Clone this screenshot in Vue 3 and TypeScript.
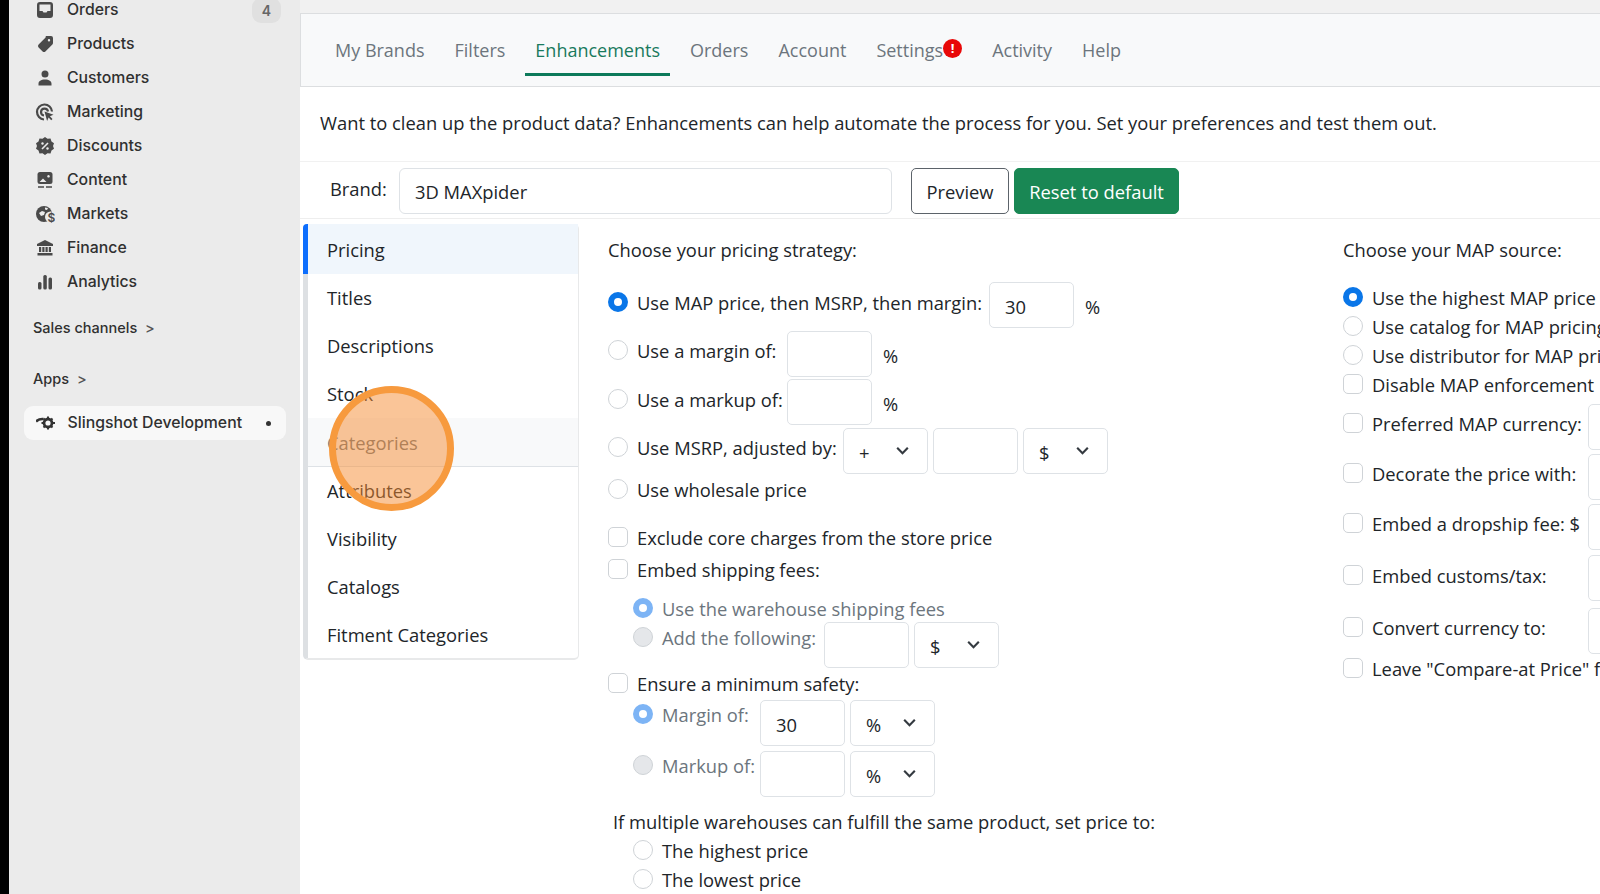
<script setup lang="ts">
const navItems = ['Products', 'Customers', 'Marketing', 'Discounts', 'Content', 'Markets', 'Finance', 'Analytics']
const tabs = ['Pricing', 'Titles', 'Descriptions', 'Stock', 'Categories', 'Attributes', 'Visibility', 'Catalogs', 'Fitment Categories']
</script>

<template>
  <div class="root">
    <aside class="side">
      <div class="nav">
        <div class="item">
          <svg class="ico" viewBox="0 0 20 20"><path d="M5 2h10a3 3 0 0 1 3 3v10a3 3 0 0 1-3 3H5a3 3 0 0 1-3-3V5a3 3 0 0 1 3-3zM4.500 4.500v6.500h3l1 1.500h3l1-1.500h3V4.500z" fill="#4a4a4a" fill-rule="evenodd"/></svg>
          <span>Orders</span><b class="count">4</b>
        </div>
        <div v-for="n in navItems" :key="n" class="item">
          <svg class="ico" viewBox="0 0 20 20">
            <path v-if="n === 'Products'" d="M11 2h5a2 2 0 0 1 2 2v5a2 2 0 0 1-.6 1.400l-7 7a2 2 0 0 1-2.800 0l-4-4a2 2 0 0 1 0-2.800l7-7A2 2 0 0 1 11 2zm3 3a1.200 1.200 0 1 0 0 2.400A1.200 1.200 0 0 0 14 5z" fill="#4a4a4a" fill-rule="evenodd"/>
            <path v-else-if="n === 'Customers'" d="M10 2.500a3.500 3.500 0 1 1 0 7 3.500 3.500 0 0 1 0-7zM3.500 17.500v-1.700c0-2.600 2.400-4.300 6.500-4.300s6.500 1.700 6.500 4.300v1.700z" fill="#4a4a4a"/>
            <g v-else-if="n === 'Marketing'"><path d="M9 17.500a7.500 7.500 0 1 1 8-8M9 13.500a3.500 3.500 0 1 1 4-4" fill="none" stroke="#4a4a4a" stroke-width="2.200"/><path d="M9.500 9.500l9 3.200-3.600 1.600 2.600 2.700-1.300 1.300-2.600-2.700-1.500 3.400z" fill="#4a4a4a"/></g>
            <g v-else-if="n === 'Discounts'"><path d="M10 1l2.500 1.800 3-.3 1 2.900 2.500 1.800-1 2.800 1 2.800-2.500 1.800-1 2.900-3-.3L10 19l-2.500-1.800-3 .3-1-2.900L1 12.800 2 10 1 7.200l2.500-1.800 1-2.900 3 .3z" fill="#4a4a4a"/><path d="M7 13l6-6" stroke="#ebebeb" stroke-width="1.600"/><circle cx="7.500" cy="7.500" r="1.200" fill="#ebebeb"/><circle cx="12.500" cy="12.500" r="1.200" fill="#ebebeb"/></g>
            <g v-else-if="n === 'Content'"><rect x="2.500" y="2" width="15" height="12" rx="2.500" fill="#4a4a4a"/><path d="M4.500 12l3.500-3.500 3.500 3.500zM13.500 5a1.300 1.300 0 1 0 .01 0z" fill="#ebebeb"/><path d="M3 17h6M11 17h6" stroke="#4a4a4a" stroke-width="1.500"/></g>
            <g v-else-if="n === 'Markets'"><circle cx="9" cy="10" r="8" fill="#4a4a4a"/><path d="M4 9l3-2 3 1-1 3-3 1zM10 3.500l3 .5-1 2-2-.5z" fill="#ebebeb"/><circle cx="15.500" cy="13" r="5.500" fill="#ebebeb"/><text x="12.500" y="18" font-size="12" font-family="Inter, sans-serif" font-weight="600" fill="#4a4a4a">$</text></g>
            <path v-else-if="n === 'Finance'" d="M10 2l8 4v2H2V6zM4 9h2.200v5H4zM7.300 9h2.200v5H7.300zM10.500 9h2.200v5h-2.200zM13.800 9H16v5h-2.200zM2.500 15h15v2.500h-15z" fill="#4a4a4a"/>
            <g v-else fill="#4a4a4a"><rect x="3" y="10" width="3.500" height="7.500" rx="1.500"/><rect x="8.300" y="3" width="3.500" height="14.500" rx="1.500"/><rect x="13.500" y="5.500" width="3.500" height="12" rx="1.500"/></g>
          </svg>
          <span>{{ n }}</span>
        </div>
      </div>
      <div class="group first">Sales channels <i class="gt">&gt;</i></div>
      <div class="group apps">Apps <i class="gt">&gt;</i></div>
      <div class="app">
        <svg class="ico" viewBox="0 0 20 20"><path d="M0 8.500c2-2 4.500-2.800 7.500-2.500" stroke="#333" stroke-width="2.600" fill="none"/><circle cx="12" cy="10" r="4" fill="none" stroke="#333" stroke-width="2.800"/><path d="M12 3.500v2M12 14.500v2M5.500 10h2M16.500 10H19M7.500 5.500L9 7M16.500 5.500L15 7M7.500 14.500L9 13M16.500 14.500L15 13" stroke="#333" stroke-width="2"/></svg>
        <span>Slingshot Development</span><i class="dot"></i>
      </div>
    </aside>

    <main class="main">
      <nav class="tabs">
        <a class="tab">My Brands</a>
        <a class="tab">Filters</a>
        <a class="tab on">Enhancements</a>
        <a class="tab">Orders</a>
        <a class="tab">Account</a>
        <a class="tab">Settings<b class="alert">!</b></a>
        <a class="tab">Activity</a>
        <a class="tab">Help</a>
      </nav>
      <p class="intro">Want to clean up the product data? Enhancements can help automate the process for you. Set your preferences and test them out.</p>
      <div class="brand">
        <label class="brand-label">Brand:</label>
        <div class="brand-input">3D MAXpider</div>
        <button class="btn">Preview</button>
        <button class="btn green">Reset to default</button>
      </div>

      <div class="body">
        <ul class="list">
          <li v-for="(t, i) in tabs" :key="t" class="row" :class="{ active: i === 0, hover: t === 'Categories' }">{{ t }}</li>
          <li class="click"></li>
        </ul>

        <section class="col left">
          <h4 class="head">Choose your pricing strategy:</h4>
          <div class="line"><i class="mark radio on"></i><label class="l w1">Use MAP price, then MSRP, then margin:</label><div class="field">30</div><span class="unit">%</span></div>
          <div class="line"><i class="mark radio"></i><label class="l w2">Use a margin of:</label><div class="field d1"></div><span class="unit d1">%</span></div>
          <div class="line"><i class="mark radio"></i><label class="l w2">Use a markup of:</label><div class="field"></div><span class="unit">%</span></div>
          <div class="line"><i class="mark radio"></i><label class="l w3">Use MSRP, adjusted by:</label>
            <div class="field sel d1"><span>+</span><svg viewBox="0 0 16 16"><path d="M3 5.500l5 5 5-5" /></svg></div>
            <div class="field d1"></div>
            <div class="field sel d1"><span>$</span><svg viewBox="0 0 16 16"><path d="M3 5.500l5 5 5-5" /></svg></div>
          </div>
          <div class="line"><i class="mark radio"></i><label class="l">Use wholesale price</label></div>
          <div class="line"><i class="mark check"></i><label class="l">Exclude core charges from the store price</label></div>
          <div class="line"><i class="mark check"></i><label class="l">Embed shipping fees:</label></div>
          <div class="line sub off"><i class="mark radio on"></i><label class="l">Use the warehouse shipping fees</label></div>
          <div class="line sub off"><i class="mark radio"></i><label class="l w4">Add the following:</label><div class="field d5"></div><div class="field sel d5"><span>$</span><svg viewBox="0 0 16 16"><path d="M3 5.500l5 5 5-5" /></svg></div></div>
          <div class="line"><i class="mark check"></i><label class="l">Ensure a minimum safety:</label></div>
          <div class="line sub off"><i class="mark radio on"></i><label class="l w5">Margin of:</label><div class="field d6">30</div><div class="field sel d6"><span>%</span><svg viewBox="0 0 16 16"><path d="M3 5.500l5 5 5-5" /></svg></div></div>
          <div class="line sub off"><i class="mark radio"></i><label class="l w5">Markup of:</label><div class="field d6"></div><div class="field sel d6"><span>%</span><svg viewBox="0 0 16 16"><path d="M3 5.500l5 5 5-5" /></svg></div></div>
          <div class="line multi"><label class="l">If multiple warehouses can fulfill the same product, set price to:</label></div>
          <div class="line sub"><i class="mark radio"></i><label class="l">The highest price</label></div>
          <div class="line sub"><i class="mark radio"></i><label class="l">The lowest price</label></div>
        </section>

        <section class="col right">
          <h4 class="head">Choose your MAP source:</h4>
          <div class="line"><i class="mark radio on"></i><label class="l">Use the highest MAP price</label></div>
          <div class="line"><i class="mark radio"></i><label class="l">Use catalog for MAP pricing</label></div>
          <div class="line"><i class="mark radio"></i><label class="l">Use distributor for MAP pricing</label></div>
          <div class="line"><i class="mark check"></i><label class="l">Disable MAP enforcement</label></div>
          <div class="line"><i class="mark check"></i><label class="l w6">Preferred MAP currency:</label><div class="field d1"></div></div>
          <div class="line"><i class="mark check"></i><label class="l w6">Decorate the price with:</label><div class="field d1"></div></div>
          <div class="line"><i class="mark check"></i><label class="l w6">Embed a dropship fee: $</label><div class="field d1"></div></div>
          <div class="line"><i class="mark check"></i><label class="l w6">Embed customs/tax:</label><div class="field"></div></div>
          <div class="line"><i class="mark check"></i><label class="l w6">Convert currency to:</label><div class="field d1"></div></div>
          <div class="line"><i class="mark check"></i><label class="l">Leave "Compare-at Price" field blank</label></div>
        </section>
      </div>
    </main>
  </div>
</template>

<style>
html, body { margin: 0; background: #000; overflow: hidden; }
</style>

<style scoped>
* { box-sizing: border-box; }
.root { display: flex; width: 1600px; height: 894px; overflow: hidden; padding-left: 9px; background: #000; }
.side { flex: none; width: 291px; height: 894px; background: #ebebeb; font-family: Inter, sans-serif; color: #303030; font-size: 15.800px; font-weight: 500; }
.nav { margin-top: -7.500px; padding-left: 26px; }
.item { display: flex; align-items: center; height: 34px; position: relative; }
.ico { flex: none; width: 20px; height: 20px; margin-right: 12px; }
.count { position: absolute; left: 217px; top: 5px; width: 29px; height: 25px; border-radius: 9px; background: #e0e0e0; color: #666; font-size: 14px; font-weight: 600; display: flex; align-items: center; justify-content: center; }
.group { height: 24px; line-height: 24px; padding-left: 24px; font-size: 14.500px; }
.group.first { margin-top: 17px; }
.group.apps { margin-top: 27px; }
.gt { font-style: normal; margin-left: 4px; color: #555; }
.app { display: flex; align-items: center; margin: 15px 0 0 14.500px; width: 262px; height: 34px; background: #f8f8f8; border-radius: 9px; padding-left: 12px; position: relative; }
.app .dot { position: absolute; left: 242px; top: 15px; width: 5px; height: 5px; border-radius: 50%; background: #333; }

.main { flex: none; width: 1300px; background: #fff; font-family: "Open Sans", sans-serif; font-size: 18.350px; color: #212529; padding-top: 13px; box-shadow: inset 0 13px 0 #f1f1f1; }
.tabs { display: flex; gap: 10px; height: 74px; padding: 9px 0 0 24px; background: #f8f9fa; border: 1px solid #dcdee0; border-right: 0; margin-bottom: 0; font-size: 18px; }
.tab { height: 53px; line-height: 54px; padding: 0 10px; color: #6c757d; border-bottom: 3px solid transparent; display: flex; white-space: nowrap; }
.tab.on { color: #197a5d; border-bottom-color: #0d7a5a; }
.alert { align-self: center; margin-top: 0; width: 19px; height: 19px; border-radius: 50%; background: #e80808; color: #fff; font-size: 13px; line-height: 19px; text-align: center; font-weight: 700; }

.intro { margin: 0; height: 75px; padding: 19px 0 0 20px; line-height: 34px; white-space: nowrap; border-bottom: 1px solid #f1f1f1; }
.brand { display: flex; align-items: flex-start; height: 57px; padding: 6px 0 0 30px; border-bottom: 1px solid #eee; }
.brand-label { width: 69px; line-height: 42px; }
.brand-input { width: 493px; height: 46px; border: 1px solid #dee2e6; border-radius: 6px; padding-left: 15px; line-height: 46px; }
.btn { height: 46px; margin: 0 0 0 5px; font: inherit; background: #fff; border: 1px solid #5c636a; border-radius: 5px; color: #212529; padding: 1px 0 0; width: 98px; }
.btn:first-of-type { margin-left: 19px; }
.green { width: 165px; background: #198754; border-color: #198754; color: #fff; }

.body { display: flex; padding: 5px 0 0 3px; }
.list { position: relative; flex: none; width: 276px; height: 436px; margin: 0 29px 0 0; padding: 0; list-style: none; border-radius: 5px; border-left: 5px solid #dde0e3; border-right: 1px solid #e8e9ea; border-bottom: 2px solid #e8e9ea; }
.row { height: 48px; padding-left: 19px; line-height: 47px; }
.row.active { height: 50px; margin-left: -5px; padding-left: 19px; border-left: 5px solid #0d6efd; background: #f0f6fc; border-radius: 4px 0 0 0; line-height: 52px; }
.row.hover { height: 49px; background: #f8f9fa; color: #6c757d; border-bottom: 1px solid #dee2e6; line-height: 50px; }
.click { position: absolute; left: 21px; top: 162px; width: 125px; height: 125px; border-radius: 50%; border: 7px solid #f79a3e; background: rgba(245, 140, 50, 0.5); }

.col { display: grid; flex: none; align-content: start; }
.left { width: 735px; grid-template-rows: 58px 48px 49px 48px 42px 48px 32px 39px 29px 46px 31px 51px 58px 27px 29px 40px; }
.right { width: 400px; grid-template-rows: 53px 29px 29px 29px 39px 50px 50px 52px 52px 41px 40px; }
.head { margin: 0; font: inherit; line-height: 51px; white-space: nowrap; }
.line { display: flex; align-items: flex-start; height: 40px; white-space: nowrap; }
.sub { margin-left: 25px; }
.off .l { color: #6c757d; }
.multi { margin-left: 5px; }
.multi .l { line-height: 38px; }
.mark { flex: none; width: 20px; height: 20px; margin: 10px 9px 0 0; border: 1px solid #cfd3d7; background: #fff; }
.radio { border-radius: 50%; }
.check { border-radius: 5px; }
.radio.on { border: 6px solid #0a76e8; }
.off .radio { background: #e5e7ea; }
.off .radio.on { border-color: #7db4f5; background: #fff; }
.l { line-height: 42px; flex: none; }
.w1 { width: 352px; }
.w2 { width: 150px; }
.w3 { width: 206px; }
.w4 { width: 162px; }
.w5 { width: 98px; }
.w6 { width: 216px; }
.field { flex: none; display: flex; align-items: center; justify-content: space-between; width: 85px; height: 46px; margin-right: 5px; padding: 2px 15px 0; border: 1px solid #dee2e6; border-radius: 5px; }
.d1 { margin-top: 1px; }
.d5 { margin-top: 5px; }
.d6 { margin-top: 6px; }
.sel svg { width: 17px; height: 17px; margin: -3px 1px 0 0; fill: none; stroke: #343a40; stroke-width: 2; }
.unit { line-height: 50px; margin-left: 6px; }
</style>
